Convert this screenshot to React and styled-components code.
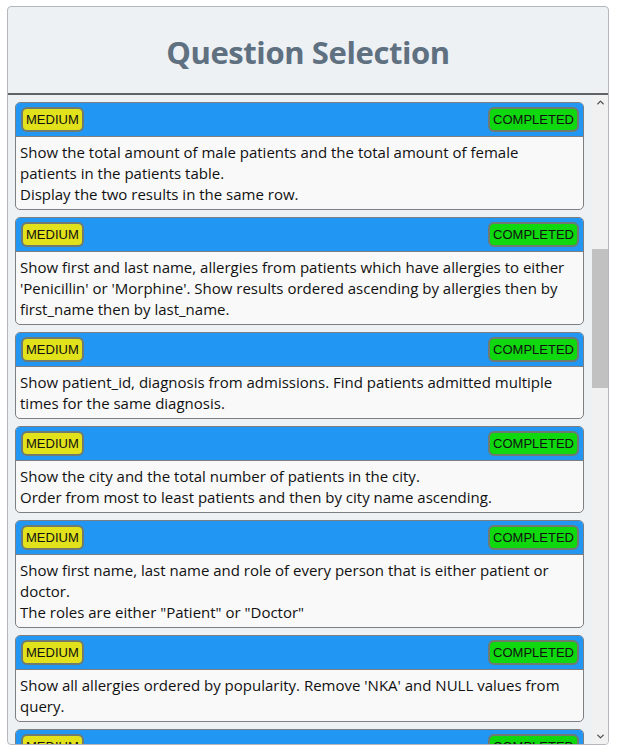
import React, { useLayoutEffect, useRef, useState } from 'react'
import styled, { createGlobalStyle } from 'styled-components'
import { ChevronUp, ChevronDown } from 'lucide-react'

const GlobalStyle = createGlobalStyle`
  html, body {
    margin: 0;
    padding: 0;
    background: #ffffff;
  }
  body {
    font-family: "Open Sans", "Noto Sans", sans-serif;
  }
`

const questions = [
  { text: 'Show unique birth years from patients and order them by ascending.' },
  { text: 'Show unique first names from the patients table which only occurs once in the list.\nFor example, if two or more people are named \'John\' in the first_name column then don\'t include their name in the output list.' },
  { text: 'Show patient_id and first_name from patients where their first_name start and ends with \'s\' and is at least 6 characters long.' },
  { text: 'Show patient_id, first_name, last_name from patients whos diagnosis is \'Dementia\'.\nPrimary diagnosis is stored in the admissions table.' },
  { text: 'Show patient_id, first_name, last_name, and attending doctor\'s specialty.\nShow only the patients who has a diagnosis as \'Epilepsy\' and the doctor\'s first name is \'Lisa\'\nCheck patients, admissions, and doctors tables for required information.' },
  { text: 'Display every patient\'s first_name.\nOrder the list by the length of each name and then by alphabetically.' },
  { text: 'Show the total amount of male patients and the total amount of female patients in the patients table.\nDisplay the two results in the same row.', anchor: true },
  { text: 'Show first and last name, allergies from patients which have allergies to either \'Penicillin\' or \'Morphine\'. Show results ordered ascending by allergies then by first_name then by last_name.' },
  { text: 'Show patient_id, diagnosis from admissions. Find patients admitted multiple times for the same diagnosis.' },
  { text: 'Show the city and the total number of patients in the city.\nOrder from most to least patients and then by city name ascending.' },
  { text: 'Show first name, last name and role of every person that is either patient or doctor.\nThe roles are either "Patient" or "Doctor"' },
  { text: 'Show all allergies ordered by popularity. Remove \'NKA\' and NULL values from query.' },
  { text: 'Show all patient\'s first_name, last_name, and birth_date who were born in the 1970s decade. Sort the list starting from the earliest birth_date.' },
  { text: 'We want to display each patient\'s full name in a single column. Their last_name in all upper letters must appear first, then first_name in all lower case letters. Separate the last_name and first_name with a comma. Order the list by the first_name in decending order\nEX: SMITH,jane' },
  { text: 'Show the province_id(s), sum of height; where the total sum of its patient\'s height is greater than or equal to 7,000.' },
  { text: 'Show the difference between the largest weight and smallest weight for patients with the last name \'Maroni\'' },
  { text: 'Show all of the days of the month (1-31) and how many admission_dates occurred on that day. Sort by the day with most admissions to least admissions.' },
  { text: 'Show all columns for patient_id 542\'s most recent admission_date.' },
  { text: 'Show patient_id, attending_doctor_id, and diagnosis for admissions that match one of the two criteria:\n1. patient_id is an odd number and attending_doctor_id is either 1, 5, or 19.\n2. attending_doctor_id contains a 2 and the length of patient_id is 3 characters.' },
  { text: 'Show first_name, last_name, and the total number of admissions attended for each doctor.\nEvery admission has been attended by a doctor.' },
  { text: 'For each physician, display their id, full name, and the first and last admission date they attended.' },
  { text: 'Display the total amount of patients for each province. Order by descending.' },
  { text: 'For every admission, display the patient\'s full name, their admission diagnosis, and their doctor\'s full name who diagnosed their problem.' },
  { text: 'display the first name, last name and number of duplicate patients based on their first name and last name.' },
  { text: 'Display patient\'s full name, height in the units feet rounded to 1 decimal, weight in the unit pounds rounded to 0 decimals, birth_date, gender non abbreviated.' },
  { text: 'Show patient_id, first_name, last_name from patients whose does not have any records in the admissions table.' },
  { text: 'Display a single row with max_visits, min_visits, average_visits where the maximum, minimum and average number of admissions per day is calculated. Average is rounded to 2 decimal places.' },
  { text: 'Display every patient that has at least one admission and show their most recent admission along with the patient and doctor\'s full name.' },
]

function QuestionCard({ text, cardRef }) {
  return (
    <Card ref={cardRef}>
      <CardHeader>
        <Badge $tone="medium">MEDIUM</Badge>
        <Badge $tone="done">COMPLETED</Badge>
      </CardHeader>
      <CardBody>
        {text.split('\n').map((line, i) => (
          <Line key={i}>{line}</Line>
        ))}
      </CardBody>
    </Card>
  )
}

export default function App() {
  const listRef = useRef(null)
  const anchorRef = useRef(null)
  const trackRef = useRef(null)
  const [thumb, setThumb] = useState({ top: 0, height: 0 })

  useLayoutEffect(() => {
    const list = listRef.current
    const track = trackRef.current
    if (!list || !anchorRef.current || !track) return
    list.scrollTop = anchorRef.current.offsetTop - 7
    const trackH = track.clientHeight
    const ratio = list.clientHeight / list.scrollHeight
    const height = Math.max(20, trackH * ratio)
    const maxScroll = list.scrollHeight - list.clientHeight
    const top = maxScroll > 0 ? (list.scrollTop / maxScroll) * (trackH - height) : 0
    setThumb({ top, height })
  }, [])

  return (
    <>
      <GlobalStyle />
      <Panel>
        <Header>
          <Title>Question Selection</Title>
        </Header>
        <ListArea>
          <List ref={listRef}>
            {questions.map((q, i) => (
              <QuestionCard key={i} text={q.text} cardRef={q.anchor ? anchorRef : undefined} />
            ))}
          </List>
          <ScrollBar>
            <ArrowButton>
              <ChevronUp size={11} strokeWidth={3} />
            </ArrowButton>
            <Track ref={trackRef}>
              <Thumb style={{ top: thumb.top, height: thumb.height }} />
            </Track>
            <ArrowButton>
              <ChevronDown size={11} strokeWidth={3} />
            </ArrowButton>
          </ScrollBar>
        </ListArea>
      </Panel>
    </>
  )
}

const Panel = styled.div`
  margin: 6px 8px 0 7px;
  height: 739px;
  box-sizing: border-box;
  border: 1px solid #b4b8bc;
  border-radius: 4px;
  background: #eef1f4;
  display: flex;
  flex-direction: column;
  overflow: hidden;
`

const Header = styled.div`
  height: 86px;
  flex-shrink: 0;
  display: flex;
  align-items: center;
  justify-content: center;
  border-bottom: 2px solid #5f6366;
`

const Title = styled.h1`
  margin: 4px 0 0;
  font-family: "Open Sans", sans-serif;
  font-size: 31px;
  font-weight: 700;
  color: #5f7080;
  letter-spacing: -0.4px;
`

const ListArea = styled.div`
  flex: 1;
  min-height: 0;
  display: flex;
`

const List = styled.div`
  flex: 1;
  overflow-y: scroll;
  padding: 7px 8px 0 7px;
  display: flex;
  flex-direction: column;
  gap: 7px;
  position: relative;
  scrollbar-width: none;

  &::-webkit-scrollbar {
    display: none;
  }
`

const ScrollBar = styled.div`
  width: 16px;
  flex-shrink: 0;
  display: flex;
  flex-direction: column;
  background: #f1f1f1;
`

const ArrowButton = styled.div`
  height: 15px;
  display: flex;
  align-items: center;
  justify-content: center;
  color: #505050;
`

const Track = styled.div`
  flex: 1;
  position: relative;
`

const Thumb = styled.div`
  position: absolute;
  left: 0;
  right: 0;
  background: #c1c1c1;
`

const Card = styled.div`
  flex-shrink: 0;
  border: 1px solid #7d7f82;
  border-radius: 5px;
  background: #f9f9f9;
  overflow: hidden;
`

const CardHeader = styled.div`
  background: #2196f3;
  display: flex;
  justify-content: space-between;
  align-items: center;
  padding: 4px 4px 4px 5px;
  border-bottom: 1px solid #7d7f82;
`

const Badge = styled.span`
  font-family: "Liberation Sans", Arial, sans-serif;
  font-size: 13px;
  line-height: 21px;
  color: #111;
  padding: 0 3px;
  border: 2px solid #6f7a70;
  border-radius: 6px;
  background: ${p => (p.$tone === 'medium' ? '#e2e21c' : '#0fd80f')};
`

const CardBody = styled.div`
  padding: 5px 4px 4px 4px;
  font-family: "Open Sans", sans-serif;
  font-size: 15px;
  line-height: 21px;
  color: #111;
`

const Line = styled.div``
